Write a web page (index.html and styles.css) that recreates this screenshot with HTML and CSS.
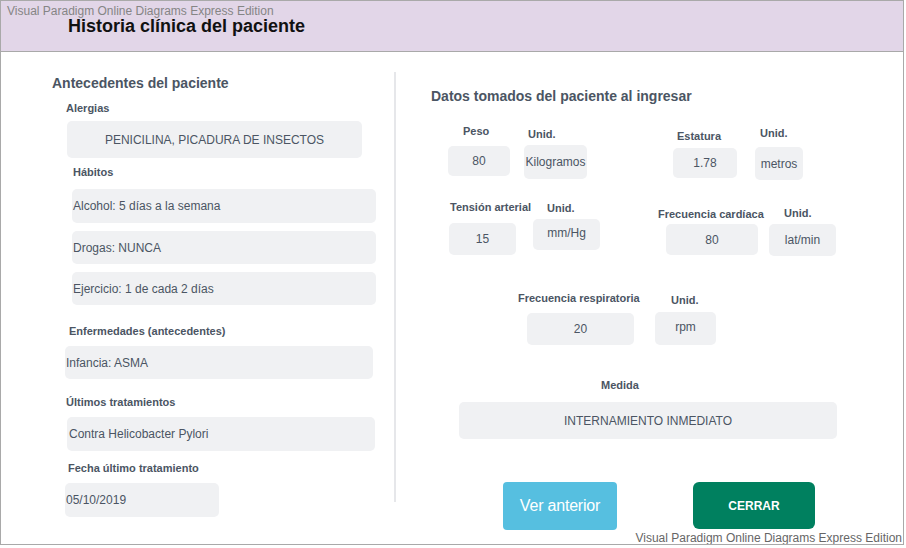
FILE: index.html
```html
<!DOCTYPE html>
<html lang="es">
<head>
<meta charset="utf-8">
<title>Historia clínica del paciente</title>
<link rel="stylesheet" href="styles.css">
</head>
<body>
<div class="frame">
  <header class="header">
    <span class="wm wm-top">Visual Paradigm Online Diagrams Express Edition</span>
    <h1 class="title">Historia clínica del paciente</h1>
  </header>
  <main class="content">
    <section class="left">
      <h2 class="section-title st-left">Antecedentes del paciente</h2>
      <div class="label l-alergias">Alergias</div>
      <div class="box center b-alergias">PENICILINA, PICADURA DE INSECTOS</div>
      <div class="label l-habitos">Hábitos</div>
      <div class="box b-habito b-alcohol">Alcohol: 5 días a la semana</div>
      <div class="box b-habito b-next">Drogas: NUNCA</div>
      <div class="box b-habito b-next">Ejercicio: 1 de cada 2 días</div>
      <div class="label l-enf">Enfermedades (antecedentes)</div>
      <div class="box b-infancia">Infancia: ASMA</div>
      <div class="label l-ult">Últimos tratamientos</div>
      <div class="box b-contra">Contra Helicobacter Pylori</div>
      <div class="label l-fecha">Fecha último tratamiento</div>
      <div class="box b-fecha">05/10/2019</div>
    </section>
    <div class="divider"></div>
    <section class="right">
      <h2 class="section-title st-right">Datos tomados del paciente al ingresar</h2>
      <div class="row row1">
        <div class="field f-peso">
          <div class="label">Peso</div>
          <div class="box center">80</div>
        </div>
        <div class="field f-kg">
          <div class="label">Unid.</div>
          <div class="box center">Kilogramos</div>
        </div>
        <div class="field f-est">
          <div class="label">Estatura</div>
          <div class="box center">1.78</div>
        </div>
        <div class="field f-m">
          <div class="label">Unid.</div>
          <div class="box center">metros</div>
        </div>
      </div>
      <div class="row row2">
        <div class="field f-ten">
          <div class="label">Tensión arterial</div>
          <div class="box center">15</div>
        </div>
        <div class="field f-mmhg">
          <div class="label">Unid.</div>
          <div class="box center">mm/Hg</div>
        </div>
        <div class="field f-card">
          <div class="label">Frecuencia cardíaca</div>
          <div class="box center">80</div>
        </div>
        <div class="field f-lat">
          <div class="label">Unid.</div>
          <div class="box center">lat/min</div>
        </div>
      </div>
      <div class="row row3">
        <div class="field f-resp">
          <div class="label">Frecuencia respiratoria</div>
          <div class="box center">20</div>
        </div>
        <div class="field f-rpm">
          <div class="label">Unid.</div>
          <div class="box center">rpm</div>
        </div>
      </div>
      <div class="label l-medida">Medida</div>
      <div class="box center b-medida">INTERNAMIENTO INMEDIATO</div>
      <div class="actions">
        <button class="btn btn-prev" type="button">Ver anterior</button>
        <button class="btn btn-close" type="button">CERRAR</button>
      </div>
    </section>
  </main>
  <span class="wm wm-bottom">Visual Paradigm Online Diagrams Express Edition</span>
</div>
</body>
</html>
```
FILE: styles.css
```css
* { box-sizing: border-box; }
html, body { margin: 0; padding: 0; background: #ffffff; }
body { font-family: "Liberation Sans", Arial, sans-serif; color: #4b5563; }

.frame {
  position: relative;
  width: 904px;
  height: 545px;
  border: 1px solid #a9a9a9;
  background: #ffffff;
  overflow: hidden;
}

.header {
  height: 51px;
  background: #e2d6e8;
  border-bottom: 1px solid #a9a9a9;
  padding: 16px 0 0 67px;
}
.title {
  margin: 0;
  font-size: 18px;
  line-height: 18px;
  font-weight: bold;
  color: #111111;
}

.wm {
  position: absolute;
  font-size: 12px;
  line-height: 12px;
  white-space: nowrap;
}
.wm-top { top: 4px; left: 6px; color: #858585; }
.wm-bottom { top: 531px; right: 1px; color: #666666; }

.content { display: flex; height: 492px; }

.left {
  width: 393px;
  display: flex;
  flex-direction: column;
  align-items: flex-start;
}
.divider {
  width: 2px;
  height: 430px;
  margin-top: 20px;
  background: #e6e7ea;
}
.right {
  flex: 1;
  display: flex;
  flex-direction: column;
  align-items: flex-start;
}

.section-title {
  margin: 0;
  font-size: 14px;
  line-height: 16px;
  font-weight: bold;
  color: #4b5563;
  white-space: nowrap;
}
.st-left { margin: 23px 0 0 51px; }
.st-right { margin: 36px 0 0 35px; }

.label {
  font-size: 11px;
  line-height: 14px;
  font-weight: bold;
  color: #4b5563;
  white-space: nowrap;
}

.box {
  display: flex;
  align-items: center;
  background: #f0f1f3;
  border-radius: 5px;
  font-size: 12px;
  line-height: 14px;
  color: #4b5563;
  padding-left: 1px;
  white-space: nowrap;
}
.box.center { justify-content: center; padding-left: 0; }

/* left column */
.l-alergias { margin: 10px 0 0 65px; }
.b-alergias { margin: 6px 0 0 66px; width: 295px; height: 37px; }
.l-habitos { margin: 7px 0 0 72px; }
.b-habito { margin-left: 71px; width: 304px; height: 33px; }
.b-alcohol { margin-top: 10px; height: 34px; }
.b-next { margin-top: 8px; }
.l-enf { margin: 19px 0 0 68px; }
.b-infancia { margin: 8px 0 0 64px; width: 308px; height: 33px; }
.l-ult { margin: 16px 0 0 65px; }
.b-contra { margin: 8px 0 0 66px; width: 308px; height: 34px; padding-left: 2px; }
.l-fecha { margin: 10px 0 0 67px; }
.b-fecha { margin: 8px 0 0 64px; width: 154px; height: 34px; }

/* right column */
.row { display: flex; align-items: flex-start; }
.row1 { margin-top: 16px; }
.row2 { margin-top: 16px; }
.row3 { margin-top: 32px; }
.field { display: flex; flex-direction: column; align-items: flex-start; }
.field .box { width: 100%; }

.f-peso { width: 62px; margin: 4px 0 0 52px; }
.f-peso .label { margin-left: 15px; }
.f-peso .box { margin-top: 8px; height: 30px; }

.f-kg { width: 63px; margin: 7px 0 0 14px; }
.f-kg .label { margin-left: 4px; }
.f-kg .box { margin-top: 4px; height: 34px; }

.f-est { width: 64px; margin: 9px 0 0 86px; }
.f-est .label { margin-left: 4px; }
.f-est .box { margin-top: 5px; height: 30px; }

.f-m { width: 48px; margin: 6px 0 0 18px; }
.f-m .label { margin-left: 5px; }
.f-m .box { margin-top: 7px; height: 33px; }

.f-ten { width: 67px; margin: 4px 0 0 53px; }
.f-ten .label { margin-left: 1px; }
.f-ten .box { margin-top: 9px; height: 32px; }

.f-mmhg { width: 67px; margin: 5px 0 0 17px; }
.f-mmhg .label { margin-left: 14px; }
.f-mmhg .box { margin-top: 4px; height: 31px; padding-bottom: 4px; }

.f-card { width: 92px; margin: 11px 0 0 66px; }
.f-card .label { margin-left: -8px; }
.f-card .box { margin-top: 3px; height: 31px; }

.f-lat { width: 67px; margin: 10px 0 0 11px; }
.f-lat .label { margin-left: 15px; }
.f-lat .box { margin-top: 4px; height: 32px; }

.f-resp { width: 107px; margin: 3px 0 0 131px; }
.f-resp .label { margin-left: -9px; }
.f-resp .box { margin-top: 8px; height: 32px; }

.f-rpm { width: 61px; margin: 5px 0 0 21px; }
.f-rpm .label { margin-left: 16px; }
.f-rpm .box { margin-top: 5px; height: 33px; padding-bottom: 3px; }

.l-medida { margin: 33px 0 0 205px; }
.b-medida { margin: 10px 0 0 63px; width: 378px; height: 37px; }

.actions { display: flex; align-items: flex-start; margin-top: 43px; }
.btn {
  border: none;
  margin: 0;
  padding: 0;
  color: #ffffff;
  font-family: "Liberation Sans", Arial, sans-serif;
  cursor: pointer;
}
.btn-prev {
  margin-left: 107px;
  width: 114px;
  height: 48px;
  background: #56bfe0;
  border-radius: 4px;
  font-size: 16px;
  letter-spacing: -0.2px;
}
.btn-close {
  margin-left: 76px;
  width: 122px;
  height: 47px;
  background: #00805f;
  border-radius: 6px;
  font-size: 12px;
  font-weight: bold;
}
```
